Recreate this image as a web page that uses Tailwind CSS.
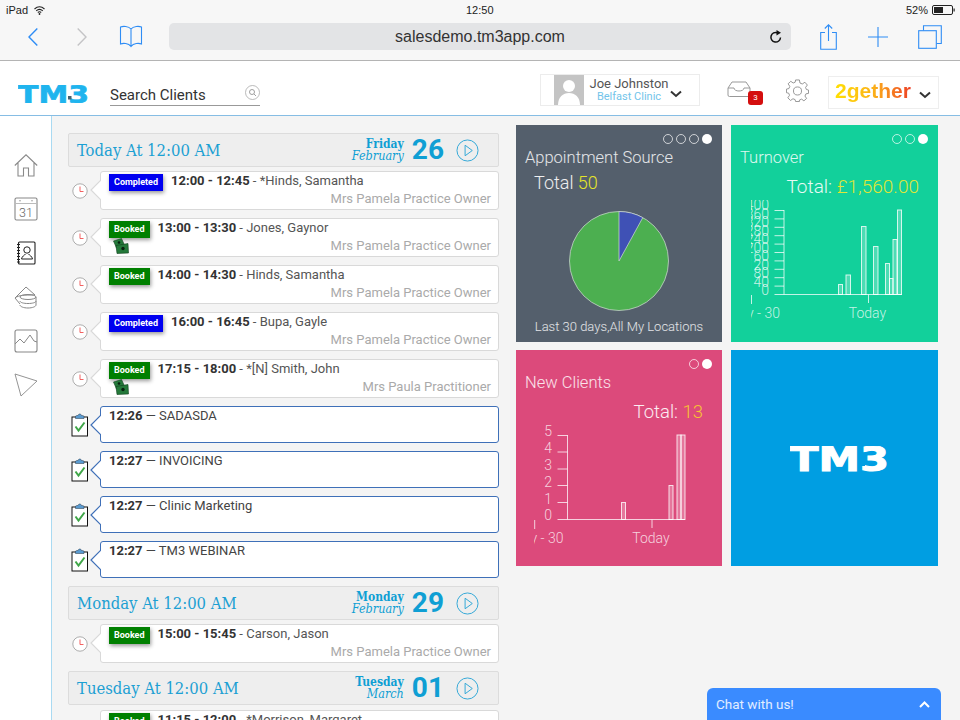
<!DOCTYPE html>
<html lang="en">

<head>
  <meta charset="UTF-8">
  <meta name="viewport" content="width=device-width, initial-scale=1.0">
  <title>TM3 Dashboard</title>
  <script src="https://cdn.jsdelivr.net/npm/@tailwindcss/browser@4"></script>
</head>

<body class="bg-[#f4f4f4] h-[720px] overflow-hidden font-['Roboto',sans-serif]">

  <svg class="hidden">
    <symbol id="clock" viewBox="0 0 16 16">
      <circle cx="8" cy="8" r="7.2" fill="#fff" stroke="#999" stroke-width="0.8"/>
      <path d="M8 3.5V8.5H11.5" fill="none" stroke="#f05050" stroke-width="0.9"/>
    </symbol>
    <symbol id="clipboard" viewBox="0 0 18 24">
      <rect x="1" y="4" width="15.5" height="19" fill="#fff" stroke="#111" stroke-width="1"/>
      <path d="M4.500 5.500V3.500C4.500 2.500 6 2.500 7 2.500C7.500 0.500 10 0.500 10.500 2.500C11.500 2.500 13 2.500 13 3.500V5.500Z" fill="#5a9bd0" stroke="#234" stroke-width="0.5"/>
      <path d="M4.500 13.500L7.500 17.500L13.500 9.500" fill="none" stroke="#3fa648" stroke-width="2"/>
    </symbol>
    <symbol id="cash" viewBox="0 0 16 16">
      <path d="M0.500 3L8.500 0.500L11.500 7L3.500 10Z" fill="#24793a" stroke="#0f3f1d" stroke-width="0.600"/>
      <path d="M3 7.500L15 5.500L15.500 15L4 15.500Z" fill="#24793a" stroke="#0f3f1d" stroke-width="0.600"/>
      <circle cx="10" cy="10.500" r="1.700" fill="#06200e"/>
      <circle cx="6" cy="4.500" r="1.300" fill="#06200e"/>
    </symbol>
    <symbol id="play" viewBox="0 0 24 24">
      <circle cx="12" cy="12" r="11" fill="none" stroke="#2ea6d6" stroke-width="1"/>
      <path d="M9.500 6.500V17.500L17 12Z" fill="none" stroke="#2ea6d6" stroke-width="1"/>
    </symbol>
    <symbol id="tip" viewBox="0 0 11 20">
      <path d="M11 0L1 10L11 20" fill="#fff" stroke="currentColor" stroke-width="1.200"/>
    </symbol>
  </svg>

  <!-- ipad status bar + safari toolbar -->
  <div class="h-[61px] bg-[#f7f7f7] border-b border-[#b4b4b4]">
    <div class="h-[20px] flex items-center text-[11px] text-[#222] relative font-['Liberation_Sans',sans-serif]">
      <span class="ml-[6px]">iPad</span>
      <svg class="ml-[6px]" width="11" height="9" viewBox="0 0 11 9"><path d="M0.500 3C3.500 0.300 7.500 0.300 10.500 3M2.200 4.800C4.200 3 6.800 3 8.800 4.800M3.800 6.500C4.800 5.600 6.200 5.600 7.200 6.500" fill="none" stroke="#222" stroke-width="1.100"/><circle cx="5.500" cy="8" r="0.900" fill="#222"/></svg>
      <span class="absolute left-[466px]">12:50</span>
      <span class="absolute left-[906px]">52%</span>
      <svg class="absolute left-[932px] top-[5px]" width="23" height="10" viewBox="0 0 23 10"><rect x="0.500" y="0.500" width="20" height="9" rx="1.500" fill="none" stroke="#222"/><rect x="2" y="2" width="9" height="6" fill="#222"/><rect x="21.500" y="3.500" width="1.200" height="3" fill="#222"/></svg>
    </div>
    <div class="flex items-center h-[27px] mt-[3px]">
      <svg class="ml-[28px]" width="10" height="18" viewBox="0 0 10 18"><path d="M9.300 0.500L1 9L9.300 17.500" fill="none" stroke="#2f8df5" stroke-width="1.400"/></svg>
      <svg class="ml-[39px]" width="10" height="18" viewBox="0 0 10 18"><path d="M0.700 0.500L9 9L0.700 17.500" fill="none" stroke="#c4c4c6" stroke-width="1.400"/></svg>
      <svg class="ml-[32px]" width="24" height="23" viewBox="0 0 24 23"><path d="M12 4C9.500 1 4 1 1.500 2V19C4 18 9.500 18 12 21.500C14.500 18 20 18 22.500 19V2C20 1 14.500 1 12 4ZM12 4V21.500" fill="none" stroke="#2f8df5" stroke-width="1.100"/></svg>
      <div class="ml-[26px] w-[622px] h-[27px] rounded-[5px] bg-[#e3e4e6] flex items-center relative">
        <span class="w-full text-center text-[16px] text-[#333] font-['Liberation_Sans',sans-serif]">salesdemo.tm3app.com</span>
        <svg class="absolute right-[8px] top-[7px]" width="14" height="14" viewBox="0 0 14 14"><path d="M11.500 7.500A4.800 4.800 0 1 1 8.500 2.800" fill="none" stroke="#111" stroke-width="1.500"/><path d="M7.500 0L12 2.800L7.500 5.500Z" fill="#111"/></svg>
      </div>
      <svg class="ml-[29px]" width="17" height="26" viewBox="0 0 17 26"><path d="M5 8.500H0.700V25.300H16.300V8.500H12M8.500 17V1M4.800 4.500L8.500 0.800L12.200 4.500" fill="none" stroke="#2f8df5" stroke-width="1.100"/></svg>
      <svg class="ml-[31px]" width="20" height="20" viewBox="0 0 20 20"><path d="M10 0V20M0 10H20" stroke="#2f8df5" stroke-width="1.100"/></svg>
      <svg class="ml-[30px]" width="24" height="24" viewBox="0 0 24 24"><path d="M5.500 5.500V0.700H23.300V18.500H18.500" fill="none" stroke="#2f8df5" stroke-width="1.100"/><rect x="0.700" y="5.700" width="17.600" height="17.600" fill="none" stroke="#2f8df5" stroke-width="1.100"/></svg>
    </div>
  </div>

  <!-- app header -->
  <div class="h-[55px] bg-white border-b border-[#86bde4] flex items-start">
    <svg class="ml-[18px] mt-[24px]" width="71" height="18" viewBox="0 0 71 18"><text x="0" y="18" font-family="DejaVu Sans" font-weight="700" font-size="24.500" fill="#1fb4ee" stroke="#1fb4ee" stroke-width="0.700" textLength="71" lengthAdjust="spacingAndGlyphs">TM3</text><rect x="50" y="11" width="3.500" height="3.500" fill="#44606e"/></svg>
    <div class="ml-[21px] mt-[24px] w-[150px] h-[21px] border-b border-[#999] flex justify-between">
      <span class="text-[15px] leading-[20px] text-[#333]">Search Clients</span>
      <svg class="mt-[0px]" width="15" height="15" viewBox="0 0 15 15"><circle cx="7.500" cy="7.500" r="7" fill="none" stroke="#aaa" stroke-width="0.800"/><circle cx="7" cy="7" r="2.500" fill="none" stroke="#888" stroke-width="0.800"/><path d="M9 9L11 11" stroke="#888" stroke-width="0.800"/></svg>
    </div>
    <div class="ml-[280px] mt-[13px] w-[160px] h-[32px] border border-[#ececec] flex">
      <div class="ml-[13px] w-[30px] h-[30px] bg-[#c4c4c4] overflow-hidden">
        <svg width="30" height="30" viewBox="0 0 30 30"><circle cx="15" cy="11" r="6" fill="#fff"/><path d="M4 30C4 22 9 18 15 18C21 18 26 22 26 30Z" fill="#fff"/></svg>
      </div>
      <div class="ml-[5px] w-[80px] text-center whitespace-nowrap">
        <div class="text-[13px] leading-[14px] mt-[2px] text-[#555]">Joe Johnston</div>
        <div class="text-[11px] leading-[12px] text-[#72c4ea]">Belfast Clinic</div>
      </div>
      <svg class="ml-[1px] mt-[15px]" width="12" height="8" viewBox="0 0 12 8"><path d="M1 1.500L6 6L11 1.500" fill="none" stroke="#333" stroke-width="2"/></svg>
    </div>
    <div class="ml-[27px] mt-[20px] relative w-[24px] h-[18px]">
      <svg width="24" height="16" viewBox="0 0 24 16"><path d="M1 7L5 1H19L23 7V14A1.500 1.500 0 0 1 21.500 15.500H2.500A1.500 1.500 0 0 1 1 14ZM1 7H7C7 11 17 11 17 7H23" fill="none" stroke="#999" stroke-width="1"/></svg>
      <div class="absolute left-[21px] top-[10px] w-[15px] h-[14px] rounded-[3px] bg-[#d40e0e] text-white text-[8px] leading-[14px] text-center">3</div>
    </div>
    <svg class="ml-[35px] mt-[18px]" width="23" height="23" viewBox="0 0 24 24"><path d="M10 1H14L14.600 4.200L17 5.200L19.700 3.400L22.300 6.300L20.400 8.800L21.300 11L23.500 11.500V15L20.800 15.500L19.800 17.800L21.500 20.300L18.700 22.800L16.300 21L14 22V23.500H10L9.500 21.500L7.300 20.600L4.700 22.400L1.900 19.600L3.700 17L2.800 14.800L0.500 14.300V10.500L3 10L4 7.700L2.200 5L5 2.400L7.500 4.200L9.600 3.300Z" fill="none" stroke="#888" stroke-width="0.900"/><circle cx="12" cy="12.500" r="4.200" fill="none" stroke="#888" stroke-width="0.900"/></svg>
    <div class="ml-[19px] mt-[15px] w-[111px] h-[33px] border border-[#eee] flex items-center">
      <span class="ml-[6px] text-[21px] font-bold leading-[28px] mb-[3px] text-transparent bg-clip-text bg-gradient-to-r from-[#ffe000] via-[#fbb117] to-[#ec3a23] font-['Liberation_Sans',sans-serif]">2gether</span>
      <svg class="ml-[8px] mt-[5px]" width="12" height="8" viewBox="0 0 12 8"><path d="M1 1.500L6 6L11 1.500" fill="none" stroke="#333" stroke-width="2"/></svg>
    </div>
  </div>

  <div class="flex">
    <!-- sidebar -->
    <div class="w-[52px] h-[604px] bg-white border-r border-[#a9daf2] pt-[27px] flex flex-col shrink-0">
      <div class="h-[44px] flex items-center justify-center">
        <svg width="24" height="23" viewBox="0 0 24 23"><path d="M0.800 11.500L12 0.800L23.200 11.500M4 9V22H9.500V14H14.500V22H20V9" fill="none" stroke="#8a8a8a" stroke-width="1.100"/></svg>
      </div>
      <div class="h-[44px] flex items-center justify-center">
        <svg width="24" height="24" viewBox="0 0 24 24"><rect x="1" y="1" width="22" height="22" rx="1.500" fill="none" stroke="#888" stroke-width="1.100"/><path d="M1 6.500H23" stroke="#bbb"/><circle cx="6" cy="3.700" r="0.700" fill="#888"/><circle cx="18" cy="3.700" r="0.700" fill="#888"/><text x="12" y="20" text-anchor="middle" font-family="Roboto" font-weight="300" font-size="12.500" fill="#666">31</text></svg>
      </div>
      <div class="h-[44px] flex items-center justify-center">
        <svg width="20" height="24" viewBox="0 0 20 24"><rect x="2.500" y="1" width="16.500" height="22" rx="1" fill="none" stroke="#222" stroke-width="1.100"/><path d="M1 3.500H4M1 6.500H4M1 9.500H4M1 12.500H4M1 15.500H4M1 18.500H4M1 21H4" stroke="#222" stroke-width="1"/><circle cx="11" cy="9" r="3.200" fill="none" stroke="#222"/><path d="M5.500 18C6 15 8.500 14.500 9.500 13M16.500 18C16 15 13.500 14.500 12.500 13M5.500 18H16.500" fill="none" stroke="#222"/></svg>
      </div>
      <div class="h-[44px] flex items-center justify-center">
        <svg width="23" height="23" viewBox="0 0 23 23"><path d="M1 12L12 1L21 9" fill="none" stroke="#888"/><path d="M1 12C5 9 10 9 21 9" fill="none" stroke="#888"/><ellipse cx="14" cy="11" rx="8" ry="2.500" fill="none" stroke="#888"/><path d="M1 12L6 18M6 15C6 16.500 9.500 17.500 14 17.500C18.500 17.500 22 16.500 22 15M6 19C6 20.500 9.500 22 14 22C18.500 22 22 20.500 22 19M22 11V19" fill="none" stroke="#888"/></svg>
      </div>
      <div class="h-[44px] flex items-center justify-center">
        <svg width="24" height="24" viewBox="0 0 24 24"><rect x="1" y="1" width="22" height="22" rx="2" fill="none" stroke="#888" stroke-width="1.100"/><path d="M1 15L6 10L10 14L16 6L20 12L23 13" fill="none" stroke="#888"/></svg>
      </div>
      <div class="h-[44px] flex items-center justify-center">
        <svg width="24" height="24" viewBox="0 0 24 24"><path d="M1 1L23 8L7 23Z" fill="none" stroke="#888" stroke-width="0.900"/></svg>
      </div>
    </div>

    <!-- agenda list -->
    <div class="w-[431px] ml-[16px] mt-[17px] flex flex-col gap-2 shrink-0">

      <div class="h-[34px] -mb-1 bg-[#eeeeee] border border-[#dcdcdc] rounded-[2px] flex items-center pl-[8px]">
        <span class="text-[16.500px] mt-[2px] text-[#1ca0d3] font-['DejaVu_Serif_Condensed',serif] font-light flex-1">Today At 12:00 AM</span>
        <div class="text-right mr-[8px] text-[#0f9fd4] font-['DejaVu_Serif_Condensed',serif]">
          <div class="text-[12px] leading-[12px] font-bold">Friday</div>
          <div class="text-[12.500px] leading-[12px] italic">February</div>
        </div>
        <span class="text-[28px] font-bold text-[#0f9fd4] leading-none">26</span>
        <svg class="ml-[12px] mr-[19px]" width="23" height="23"><use href="#play"/></svg>
      </div>

      <div class="flex h-[39px]">
        <div class="w-[32px] flex items-center pl-[4px]"><svg width="16" height="16"><use href="#clock"/></svg></div>
        <div class="flex-1 bg-white border border-[#d9d9d9] rounded-[3px] relative flex pl-[8px] pr-[7px]">
          <svg class="absolute left-[-11px] top-[8px] text-[#d9d9d9]" width="11" height="20"><use href="#tip"/></svg>
          <div class="mt-[2px]"><div class="h-[17px] px-[5px] bg-[#0000f0] text-white text-[9px] font-bold leading-[17px] shadow-[1px_2px_4px_rgba(0,0,0,0.4)]">Completed</div></div>
          <div class="flex-1 ml-[8px]">
            <div class="h-[18px] text-[13px] leading-[18px] text-[#555]"><b class="text-[#333]">12:00 - 12:45</b> - *Hinds, Samantha</div>
            <div class="h-[18px] text-[13px] leading-[18px] text-[#aaa] text-right">Mrs Pamela Practice Owner</div>
          </div>
        </div>
      </div>

      <div class="flex h-[39px]">
        <div class="w-[32px] flex items-center pl-[4px]"><svg width="16" height="16"><use href="#clock"/></svg></div>
        <div class="flex-1 bg-white border border-[#d9d9d9] rounded-[3px] relative flex pl-[8px] pr-[7px]">
          <svg class="absolute left-[-11px] top-[8px] text-[#d9d9d9]" width="11" height="20"><use href="#tip"/></svg>
          <div class="mt-[2px]"><div class="h-[17px] px-[5px] bg-[#008000] text-white text-[9px] font-bold leading-[17px] shadow-[1px_2px_4px_rgba(0,0,0,0.4)]">Booked</div><svg class="ml-[4px]" width="16" height="16"><use href="#cash"/></svg></div>
          <div class="flex-1 ml-[8px]">
            <div class="h-[18px] text-[13px] leading-[18px] text-[#555]"><b class="text-[#333]">13:00 - 13:30</b> - Jones, Gaynor</div>
            <div class="h-[18px] text-[13px] leading-[18px] text-[#aaa] text-right">Mrs Pamela Practice Owner</div>
          </div>
        </div>
      </div>

      <div class="flex h-[39px]">
        <div class="w-[32px] flex items-center pl-[4px]"><svg width="16" height="16"><use href="#clock"/></svg></div>
        <div class="flex-1 bg-white border border-[#d9d9d9] rounded-[3px] relative flex pl-[8px] pr-[7px]">
          <svg class="absolute left-[-11px] top-[8px] text-[#d9d9d9]" width="11" height="20"><use href="#tip"/></svg>
          <div class="mt-[2px]"><div class="h-[17px] px-[5px] bg-[#008000] text-white text-[9px] font-bold leading-[17px] shadow-[1px_2px_4px_rgba(0,0,0,0.4)]">Booked</div></div>
          <div class="flex-1 ml-[8px]">
            <div class="h-[18px] text-[13px] leading-[18px] text-[#555]"><b class="text-[#333]">14:00 - 14:30</b> - Hinds, Samantha</div>
            <div class="h-[18px] text-[13px] leading-[18px] text-[#aaa] text-right">Mrs Pamela Practice Owner</div>
          </div>
        </div>
      </div>

      <div class="flex h-[39px]">
        <div class="w-[32px] flex items-center pl-[4px]"><svg width="16" height="16"><use href="#clock"/></svg></div>
        <div class="flex-1 bg-white border border-[#d9d9d9] rounded-[3px] relative flex pl-[8px] pr-[7px]">
          <svg class="absolute left-[-11px] top-[8px] text-[#d9d9d9]" width="11" height="20"><use href="#tip"/></svg>
          <div class="mt-[2px]"><div class="h-[17px] px-[5px] bg-[#0000f0] text-white text-[9px] font-bold leading-[17px] shadow-[1px_2px_4px_rgba(0,0,0,0.4)]">Completed</div></div>
          <div class="flex-1 ml-[8px]">
            <div class="h-[18px] text-[13px] leading-[18px] text-[#555]"><b class="text-[#333]">16:00 - 16:45</b> - Bupa, Gayle</div>
            <div class="h-[18px] text-[13px] leading-[18px] text-[#aaa] text-right">Mrs Pamela Practice Owner</div>
          </div>
        </div>
      </div>

      <div class="flex h-[39px]">
        <div class="w-[32px] flex items-center pl-[4px]"><svg width="16" height="16"><use href="#clock"/></svg></div>
        <div class="flex-1 bg-white border border-[#d9d9d9] rounded-[3px] relative flex pl-[8px] pr-[7px]">
          <svg class="absolute left-[-11px] top-[8px] text-[#d9d9d9]" width="11" height="20"><use href="#tip"/></svg>
          <div class="mt-[2px]"><div class="h-[17px] px-[5px] bg-[#008000] text-white text-[9px] font-bold leading-[17px] shadow-[1px_2px_4px_rgba(0,0,0,0.4)]">Booked</div><svg class="ml-[4px]" width="16" height="16"><use href="#cash"/></svg></div>
          <div class="flex-1 ml-[8px]">
            <div class="h-[18px] text-[13px] leading-[18px] text-[#555]"><b class="text-[#333]">17:15 - 18:00</b> - *[N] Smith, John</div>
            <div class="h-[18px] text-[13px] leading-[18px] text-[#aaa] text-right">Mrs Paula Practitioner</div>
          </div>
        </div>
      </div>

      <div class="flex h-[37px]">
        <div class="w-[32px] flex items-center pl-[3px]"><svg width="18" height="24"><use href="#clipboard"/></svg></div>
        <div class="flex-1 bg-white border border-[#3f70b8] rounded-[3px] relative pl-[8px] text-[13px] leading-[17px] text-[#444]">
          <svg class="absolute left-[-11px] top-[8px] text-[#3f70b8]" width="11" height="20"><use href="#tip"/></svg>
          <b class="text-[#333]">12:26</b> — SADASDA
        </div>
      </div>

      <div class="flex h-[37px]">
        <div class="w-[32px] flex items-center pl-[3px]"><svg width="18" height="24"><use href="#clipboard"/></svg></div>
        <div class="flex-1 bg-white border border-[#3f70b8] rounded-[3px] relative pl-[8px] text-[13px] leading-[17px] text-[#444]">
          <svg class="absolute left-[-11px] top-[8px] text-[#3f70b8]" width="11" height="20"><use href="#tip"/></svg>
          <b class="text-[#333]">12:27</b> — INVOICING
        </div>
      </div>

      <div class="flex h-[37px]">
        <div class="w-[32px] flex items-center pl-[3px]"><svg width="18" height="24"><use href="#clipboard"/></svg></div>
        <div class="flex-1 bg-white border border-[#3f70b8] rounded-[3px] relative pl-[8px] text-[13px] leading-[17px] text-[#444]">
          <svg class="absolute left-[-11px] top-[8px] text-[#3f70b8]" width="11" height="20"><use href="#tip"/></svg>
          <b class="text-[#333]">12:27</b> — Clinic Marketing
        </div>
      </div>

      <div class="flex h-[37px]">
        <div class="w-[32px] flex items-center pl-[3px]"><svg width="18" height="24"><use href="#clipboard"/></svg></div>
        <div class="flex-1 bg-white border border-[#3f70b8] rounded-[3px] relative pl-[8px] text-[13px] leading-[17px] text-[#444]">
          <svg class="absolute left-[-11px] top-[8px] text-[#3f70b8]" width="11" height="20"><use href="#tip"/></svg>
          <b class="text-[#333]">12:27</b> — TM3 WEBINAR
        </div>
      </div>

      <div class="h-[34px] -mb-1 bg-[#eeeeee] border border-[#dcdcdc] rounded-[2px] flex items-center pl-[8px]">
        <span class="text-[16.500px] mt-[2px] text-[#1ca0d3] font-['DejaVu_Serif_Condensed',serif] font-light flex-1">Monday At 12:00 AM</span>
        <div class="text-right mr-[8px] text-[#0f9fd4] font-['DejaVu_Serif_Condensed',serif]">
          <div class="text-[12px] leading-[12px] font-bold">Monday</div>
          <div class="text-[12.500px] leading-[12px] italic">February</div>
        </div>
        <span class="text-[28px] font-bold text-[#0f9fd4] leading-none">29</span>
        <svg class="ml-[12px] mr-[19px]" width="23" height="23"><use href="#play"/></svg>
      </div>

      <div class="flex h-[39px]">
        <div class="w-[32px] flex items-center pl-[4px]"><svg width="16" height="16"><use href="#clock"/></svg></div>
        <div class="flex-1 bg-white border border-[#d9d9d9] rounded-[3px] relative flex pl-[8px] pr-[7px]">
          <svg class="absolute left-[-11px] top-[8px] text-[#d9d9d9]" width="11" height="20"><use href="#tip"/></svg>
          <div class="mt-[2px]"><div class="h-[17px] px-[5px] bg-[#008000] text-white text-[9px] font-bold leading-[17px] shadow-[1px_2px_4px_rgba(0,0,0,0.4)]">Booked</div></div>
          <div class="flex-1 ml-[8px]">
            <div class="h-[18px] text-[13px] leading-[18px] text-[#555]"><b class="text-[#333]">15:00 - 15:45</b> - Carson, Jason</div>
            <div class="h-[18px] text-[13px] leading-[18px] text-[#aaa] text-right">Mrs Pamela Practice Owner</div>
          </div>
        </div>
      </div>

      <div class="h-[34px] -mb-[3px] bg-[#eeeeee] border border-[#dcdcdc] rounded-[2px] flex items-center pl-[8px]">
        <span class="text-[16.500px] mt-[2px] text-[#1ca0d3] font-['DejaVu_Serif_Condensed',serif] font-light flex-1">Tuesday At 12:00 AM</span>
        <div class="text-right mr-[8px] text-[#0f9fd4] font-['DejaVu_Serif_Condensed',serif]">
          <div class="text-[12px] leading-[12px] font-bold">Tuesday</div>
          <div class="text-[12.500px] leading-[12px] italic">March</div>
        </div>
        <span class="text-[28px] font-bold text-[#0f9fd4] leading-none">01</span>
        <svg class="ml-[12px] mr-[19px]" width="23" height="23"><use href="#play"/></svg>
      </div>

      <div class="flex h-[39px]">
        <div class="w-[32px]"></div>
        <div class="flex-1 bg-white border border-[#d9d9d9] rounded-[3px] relative flex pl-[8px] pr-[7px]">
          <div class="mt-[2px]"><div class="h-[17px] px-[5px] bg-[#008000] text-white text-[9px] font-bold leading-[17px] shadow-[1px_2px_4px_rgba(0,0,0,0.4)]">Booked</div></div>
          <div class="flex-1 ml-[8px]">
            <div class="h-[18px] text-[13px] leading-[18px] text-[#555]"><b class="text-[#333]">11:15 - 12:00</b> - *Morrison, Margaret</div>
          </div>
        </div>
      </div>
    </div>

    <!-- dashboard tiles -->
    <div class="ml-[17px] mt-[9px] grid grid-cols-[206px_207px] grid-rows-[217px_216px] gap-x-[9px] gap-y-[8px] text-white font-light">

      <div class="bg-[#545f6c] pt-[9px] flex flex-col">
        <div class="h-[12px] flex justify-end gap-[3px] pr-[10px]">
          <span class="w-[10px] h-[10px] rounded-full border border-white/70"></span>
          <span class="w-[10px] h-[10px] rounded-full border border-white/70"></span>
          <span class="w-[10px] h-[10px] rounded-full border border-white/70"></span>
          <span class="w-[10px] h-[10px] rounded-full bg-white"></span>
        </div>
        <div class="h-[22px] pl-[9px] text-[16.500px] leading-[24px] text-white/85">Appointment Source</div>
        <div class="h-[26px] mt-[2px] pl-[18px] text-[18px] leading-[26px] text-white/90">Total <span class="text-[#e4e42a]">50</span></div>
        <svg width="206" height="122" viewBox="0 0 206 122">
          <circle cx="103" cy="65" r="49.500" fill="#4caf50" stroke="#d5dbd8" stroke-width="0.700"/>
          <path d="M103 65V15.500A49.500 49.500 0 0 1 126.800 21.600Z" fill="#3f51b5" stroke="#d5dbd8" stroke-width="0.700"/>
        </svg>
        <div class="h-[18px] text-center text-[13px] leading-[18px] text-white/85">Last 30 days,All My Locations</div>
      </div>

      <div class="bg-[#12d09b] pt-[9px] flex flex-col">
        <div class="h-[12px] flex justify-end gap-[3px] pr-[10px]">
          <span class="w-[10px] h-[10px] rounded-full border border-white/70"></span>
          <span class="w-[10px] h-[10px] rounded-full border border-white/70"></span>
          <span class="w-[10px] h-[10px] rounded-full bg-white"></span>
        </div>
        <div class="h-[22px] pl-[9px] text-[16.500px] leading-[24px] text-white/85">Turnover</div>
        <div class="h-[26px] mt-[6px] pr-[19px] text-right text-[19px] leading-[26px] text-white/90">Total: <span class="text-[#dfe637]">£1,560.00</span></div>
        <svg class="ml-[20px]" width="187" height="125" viewBox="0 0 187 125" font-family="Roboto" font-weight="300" font-size="14" fill="#fff" fill-opacity="0.75">
          <g text-anchor="end">
            <text x="18" y="10">400</text><text x="18" y="18.500">360</text><text x="18" y="27">320</text><text x="18" y="35.500">280</text><text x="18" y="44">240</text><text x="18" y="52.500">200</text><text x="18" y="61">160</text><text x="18" y="69.500">120</text><text x="18" y="78">80</text><text x="18" y="86.500">40</text><text x="18" y="95">0</text>
            <text x="29" y="118">Day - 30</text>
          </g>
          <text x="116.500" y="118" text-anchor="middle">Today</text>
          <path d="M23.500 10.500H33M23.500 18.900H33M23.500 27.300H33M23.500 35.700H33M23.500 44.100H33M23.500 52.500H33M23.500 60.900H33M23.500 69.300H33M23.500 77.700H33M23.500 86.100H33M23.500 94.500H151M33 10V94.500M0.500 95V104M117.500 94.500V103" fill="none" stroke="#fff" stroke-opacity="0.75" stroke-width="1"/>
          <g fill="#fff" fill-opacity="0.25" stroke="#fff" stroke-opacity="0.8" stroke-width="1">
            <rect x="87.500" y="84.500" width="4" height="10"/>
            <rect x="95" y="75" width="4.500" height="19.500"/>
            <rect x="110.500" y="26.500" width="4.500" height="68"/>
            <rect x="122.500" y="46.500" width="4.500" height="48"/>
            <rect x="134.500" y="63.500" width="4" height="31"/>
            <rect x="138.500" y="78.500" width="3.500" height="16"/>
            <rect x="142" y="39.500" width="4" height="55"/>
            <rect x="146.500" y="10" width="4" height="84.500"/>
          </g>
        </svg>
      </div>

      <div class="bg-[#dc4a7b] pt-[9px] flex flex-col">
        <div class="h-[12px] flex justify-end gap-[3px] pr-[10px]">
          <span class="w-[10px] h-[10px] rounded-full border border-white/70"></span>
          <span class="w-[10px] h-[10px] rounded-full bg-white"></span>
        </div>
        <div class="h-[22px] pl-[9px] text-[16.500px] leading-[24px] text-white/85">New Clients</div>
        <div class="h-[26px] mt-[6px] pr-[19px] text-right text-[18.500px] leading-[26px] text-white/90">Total: <span class="text-[#f7c431]">13</span></div>
        <svg class="ml-[18px]" width="188" height="125" viewBox="0 0 188 125" font-family="Roboto" font-weight="300" font-size="14" fill="#fff" fill-opacity="0.75">
          <g text-anchor="end">
            <text x="18" y="11">5</text><text x="18" y="28">4</text><text x="18" y="44.500">3</text><text x="18" y="61.500">2</text><text x="18" y="78.500">1</text><text x="18" y="95">0</text>
            <text x="29.500" y="118">Day - 30</text>
          </g>
          <text x="117" y="118" text-anchor="middle">Today</text>
          <path d="M33.500 10.500H23.500M33.500 27H23.500M33.500 44H23.500M33.500 60.500H23.500M33.500 77.500H23.500M33.500 10V94.500M23.500 94.500H151M0.700 95V104M118 94.500V103" fill="none" stroke="#fff" stroke-opacity="0.75" stroke-width="1"/>
          <g fill="#fff" fill-opacity="0.25" stroke="#fff" stroke-opacity="0.8" stroke-width="1">
            <rect x="87.500" y="77.500" width="4" height="17"/>
            <rect x="135" y="60.500" width="4" height="34"/>
            <rect x="143" y="10" width="4" height="84.500"/>
            <rect x="147" y="10" width="4" height="84.500"/>
          </g>
        </svg>
      </div>

      <div class="bg-[#009ee2] flex items-start justify-center">
        <svg class="mt-[96px] ml-[10px]" width="99" height="26" viewBox="0 0 99 26"><text x="0" y="25" font-family="DejaVu Sans" font-weight="700" font-size="34" fill="#fff" stroke="#fff" stroke-width="1" textLength="99" lengthAdjust="spacingAndGlyphs">TM3</text><rect x="70" y="15" width="5" height="5" fill="#009ee2"/></svg>
      </div>
    </div>
  </div>

  <!-- chat widget -->
  <div class="fixed left-[707px] top-[688px] w-[234px] h-[32px] bg-[#3a8bff] rounded-t-[6px] flex items-center justify-between pl-[9px] pr-[11px] text-[13.500px] text-white/85">
    <span>Chat with us!</span>
    <svg width="11" height="7" viewBox="0 0 11 7"><path d="M1 6L5.500 1.500L10 6" fill="none" stroke="#fff" stroke-width="2"/></svg>
  </div>

</body>

</html>
